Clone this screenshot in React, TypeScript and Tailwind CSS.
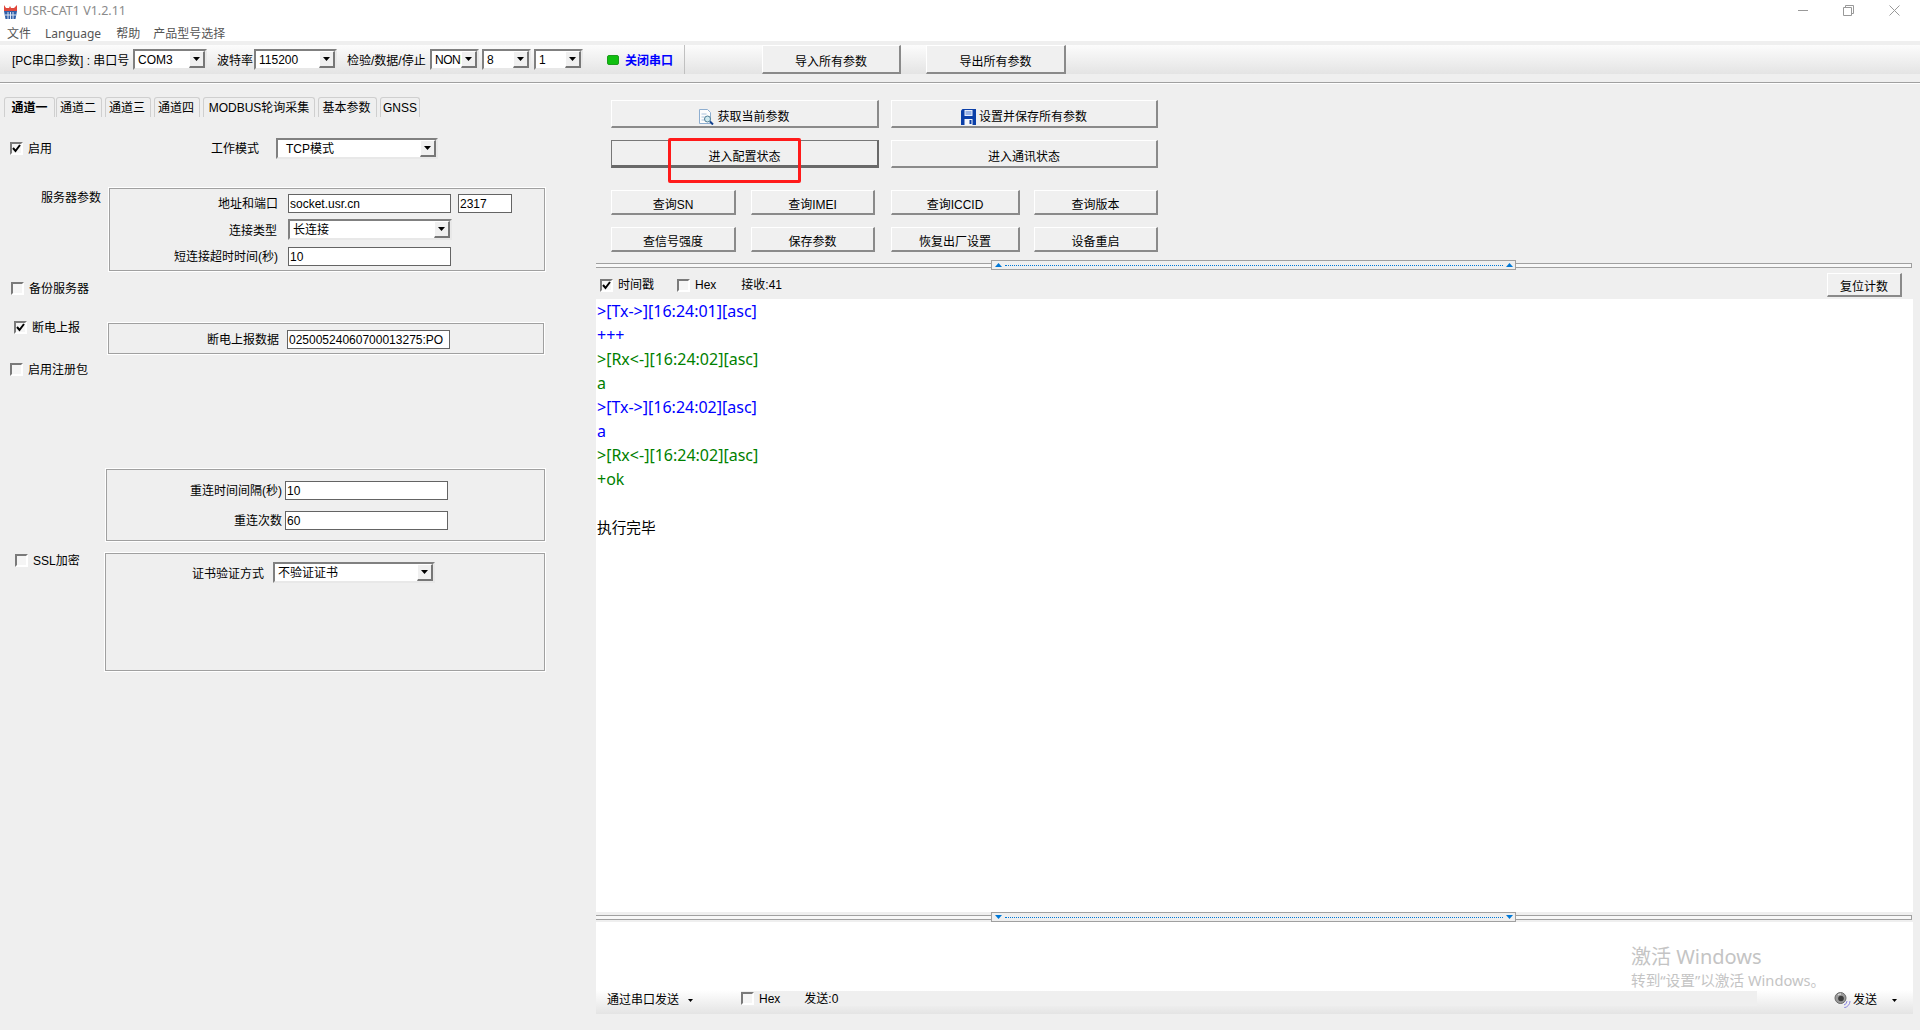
import type { ReactNode } from "react"

const bevel = "border-t border-l border-r-2 border-b-2 border-t-white border-l-white border-r-[#8a8a8a] border-b-[#8a8a8a]"

function Arrow({ small = false }: { small?: boolean }) {
  return (
    <svg width={small ? 5 : 7} height={small ? 3 : 4} viewBox="0 0 7 4" className="shrink-0">
      <path d="M0 0h7L3.500 4z" fill="#000" />
    </svg>
  )
}

function Combo({ value, w, pad = "pl-[3px]", tight = false }: { value: string; w: string; pad?: string; tight?: boolean }) {
  return (
    <div className={`${w} h-[21px] shrink-0 flex bg-white border-2 border-t-[#808080] border-l-[#808080] border-r-[#e8e8e8] border-b-[#e8e8e8]`}>
      <div className={`flex-1 overflow-hidden whitespace-nowrap leading-[18px] ${pad} ${tight ? "tracking-[-0.5px]" : ""}`}>{value}</div>
      <div className="w-[16px] h-[17px] shrink-0 flex items-center justify-center bg-[#f0f0f0] border-t border-l border-r-2 border-b-2 border-t-white border-l-white border-r-[#777777] border-b-[#777777]">
        <Arrow />
      </div>
    </div>
  )
}

function Input({ value, w }: { value: string; w: string }) {
  return (
    <div className={`${w} h-[19px] shrink-0 bg-white border border-[#646464] pl-[1px] leading-[18px] overflow-hidden whitespace-nowrap`}>
      {value}
    </div>
  )
}

function Check({ label, checked = false }: { label: string; checked?: boolean }) {
  return (
    <div className="h-[13px] flex items-center gap-[5px] whitespace-nowrap">
      <div className="w-[13px] h-[13px] shrink-0 flex items-center justify-center bg-[#f5f5f5] border-2 border-t-[#7a7a7a] border-l-[#7a7a7a] border-r-white border-b-white">
        {checked && (
          <svg width="9" height="9" viewBox="0 0 9 9">
            <path d="M1 4l2.500 3L8 1" fill="none" stroke="#000" strokeWidth="2" />
          </svg>
        )}
      </div>
      <span>{label}</span>
    </div>
  )
}

function Btn({ children, cls, focus = false, tall = false }: { children: ReactNode; cls: string; focus?: boolean; tall?: boolean }) {
  const edge = focus
    ? "border-t border-l border-r-2 border-b-[3px] border-t-[#777777] border-l-[#777777] border-r-[#696969] border-b-[#696969]"
    : bevel
  return (
    <div className={`${cls} ${edge} ${tall ? "pt-[7px]" : "pt-[5px]"} shrink-0 flex items-center justify-center gap-[3px] bg-[#f0f0f0] whitespace-nowrap`}>
      {children}
    </div>
  )
}

function Group({ cls, children }: { cls: string; children?: ReactNode }) {
  return <div className={`${cls} shrink-0 border border-[#a0a0a0] outline outline-white`}>{children}</div>
}

function Label({ text, w }: { text: string; w: string }) {
  return <div className={`${w} shrink-0 text-right whitespace-nowrap pt-[2px]`}>{text}</div>
}

function Splitter({ up = false }: { up?: boolean }) {
  const tri = up ? "M3.500 0 7 4H0z" : "M0 0h7L3.500 4z"
  return (
    <div className="h-[10px] flex items-center">
      <div className="w-[395px] h-[5px] border-y border-[#a0a0a0] bg-[#f8f8f8]" />
      <div className="w-[525px] h-[10px] flex items-center gap-[3px] pl-[3px] pr-[2px] bg-[#efefef] border border-[#a0a0a0]">
        <svg width="7" height="4" viewBox="0 0 7 4" className="shrink-0">
          <path d={tri} fill="#0078d7" />
        </svg>
        <div className="flex-1 border-t border-dotted border-[#0078d7]" />
        <svg width="7" height="4" viewBox="0 0 7 4" className="shrink-0">
          <path d={tri} fill="#0078d7" />
        </svg>
      </div>
      <div className="w-[396px] h-[5px] border-y border-r border-[#a0a0a0] bg-[#f8f8f8]" />
    </div>
  )
}

function AppIcon() {
  return (
    <svg width="13" height="14" viewBox="0 0 13 14" className="shrink-0">
      <path d="M0 0l2 3h3L6 1l1 2h3l3-3v6H0z" fill="#e0483c" />
      <path d="M0 6h13l-1.500 8H1.500z" fill="#2f5fa8" />
      <path d="M4 7v7M6.500 7v7M9 7v7M1 10h11" stroke="#dfe8f5" strokeWidth="1" />
    </svg>
  )
}

function DocIcon() {
  return (
    <svg width="15" height="16" viewBox="0 0 15 16" className="shrink-0">
      <path d="M.5.5h8l3 3v11H.5z" fill="#fdfdfd" stroke="#8eaed0" />
      <path d="M2.500 5h5M2.500 8h3M2.500 11h3" stroke="#a9c2dc" />
      <circle cx="8.500" cy="10" r="3" fill="#cfeaf0" stroke="#4f7d96" />
      <path d="M11 12.500l3 3" stroke="#12408f" strokeWidth="2" />
    </svg>
  )
}

function SaveIcon() {
  return (
    <svg width="15" height="16" viewBox="0 0 15 16" className="shrink-0">
      <path d="M0 1.500 1.500 0H15v16H0z" fill="#0b3fa8" />
      <path d="M3.500 1h8v6h-8z" fill="#e8eefc" />
      <path d="M4.500 3h6M4.500 5h6" stroke="#4a78cf" />
      <path d="M3.500 10h8v6h-8z" fill="#f4f6fb" />
      <path d="M8.500 11h2v4h-2z" fill="#0b3fa8" />
    </svg>
  )
}

function SpeakerIcon() {
  return (
    <svg width="17" height="16" viewBox="0 0 17 16" className="shrink-0">
      <circle cx="6.500" cy="6" r="5.500" fill="#9a9a9a" stroke="#6a6a6a" />
      <circle cx="7" cy="6.500" r="2.800" fill="#3c3c3c" />
      <path d="M4 3a4 4 0 0 1 3-1" stroke="#f2f2f2" fill="none" />
      <path d="M13 9q0 3-3 4M16 9q0 5-6 7" stroke="#8a84e0" strokeWidth="1" fill="none" />
    </svg>
  )
}

const tabs = [
  { t: "通道一", w: "w-[51px]", active: true },
  { t: "通道二", w: "w-[46px] ml-[1px] pr-[2px]" },
  { t: "通道三", w: "w-[46px] ml-[3px] pr-[2px]" },
  { t: "通道四", w: "w-[46px] ml-[3px] pr-[2px]" },
  { t: "MODBUS轮询采集", w: "w-[112px] ml-[3px]" },
  { t: "基本参数", w: "w-[59px] ml-[3px] pr-[2px]" },
  { t: "GNSS", w: "w-[40px] ml-[3px]" },
]

const logLines = [
  { t: ">[Tx->][16:24:01][asc]", c: "text-[#0000ff] text-[16px]" },
  { t: "+++", c: "text-[#0000ff] text-[16px]" },
  { t: ">[Rx<-][16:24:02][asc]", c: "text-[#008000] text-[16px]" },
  { t: "a", c: "text-[#008000] text-[16px]" },
  { t: ">[Tx->][16:24:02][asc]", c: "text-[#0000ff] text-[16px]" },
  { t: "a", c: "text-[#0000ff] text-[16px]" },
  { t: ">[Rx<-][16:24:02][asc]", c: "text-[#008000] text-[16px]" },
  { t: "+ok", c: "text-[#008000] text-[16px]" },
  { t: "\u00a0", c: "text-black" },
  { t: "执行完毕", c: "text-black text-[14.67px]" },
]

export default function App() {
  return (
    <div className="w-[1920px] h-[1030px] overflow-hidden flex flex-col bg-[#efefef] text-black text-[12px] font-['Liberation_Sans','Noto_Sans_CJK_SC',sans-serif]">
      {/* title bar + menu */}
      <div className="h-[41px] bg-white shrink-0 font-['Noto_Sans','Noto_Sans_CJK_SC',sans-serif]">
        <div className="h-[23px] flex items-center pl-[4px]">
          <AppIcon />
          <span className="ml-[6px] text-[12.5px] text-[#8a8a8a]">USR-CAT1 V1.2.11</span>
          <div className="ml-auto flex items-center pb-[3px]">
            <svg width="11" height="11" viewBox="0 0 11 11" className="mr-[34px]">
              <path d="M0 5.500h10" stroke="#999" />
            </svg>
            <svg width="11" height="11" viewBox="0 0 11 11" className="mr-[35px]">
              <path d="M.5 2.500h8v8h-8zM2.500 2.500v-2h8v8h-2" fill="none" stroke="#999" />
            </svg>
            <svg width="11" height="11" viewBox="0 0 11 11" className="mr-[20px]">
              <path d="M.5.500l10 10M10.500.500l-10 10" stroke="#999" />
            </svg>
          </div>
        </div>
        <div className="h-[18px] flex items-center pl-[7px] pt-[3px] text-[#555555]">
          <span>文件</span>
          <span className="ml-[14px]">Language</span>
          <span className="ml-[15px]">帮助</span>
          <span className="ml-[13px]">产品型号选择</span>
        </div>
      </div>

      {/* toolbar */}
      <div className="h-[4px] shrink-0" />
      <div className="h-[29px] shrink-0 flex items-center pl-[12px] bg-gradient-to-b from-[#fcfcfc] to-[#e4e4e4] whitespace-nowrap">
        <div className="w-[121px] shrink-0 pt-[2px]">[PC串口参数] : 串口号</div>
        <Combo value="COM3" w="w-[74px]" />
        <div className="w-[37px] ml-[10px] shrink-0 pt-[2px]">波特率</div>
        <Combo value="115200" w="w-[83px]" />
        <div className="w-[83px] ml-[10px] shrink-0 pt-[2px]">检验/数据/停止</div>
        <Combo value="NONE" w="w-[49px]" tight />
        <div className="ml-[3px]"><Combo value="8" w="w-[49px]" /></div>
        <div className="ml-[3px]"><Combo value="1" w="w-[49px]" /></div>
        <div className="ml-[24px] w-[12px] h-[10px] rounded-[2px] bg-[#10c010] border border-[#1c9c1c] shrink-0" />
        <span className="ml-[6px] font-bold text-[#0000ff] w-[59px] shrink-0 pt-[2px]">关闭串口</span>
        <div className="h-full w-[1px] bg-[#c0c0c0] shrink-0" />
        <Btn cls="h-full w-[139px] ml-[77px]">导入所有参数</Btn>
        <Btn cls="h-full w-[140px] ml-[25px]">导出所有参数</Btn>
      </div>
      <div className="h-[8px] shrink-0" />
      <div className="h-[2px] shrink-0 border-t border-[#a0a0a0] border-b-0 bg-white" />

      <div className="flex-1 flex min-h-0">
        {/* left: channel settings */}
        <div className="w-[596px] shrink-0">
          <div className="flex items-end mt-[13px] pl-[4px] h-[20px]">
            {tabs.map((tab) => (
              <div
                key={tab.t}
                className={`${tab.w} h-[20px] shrink-0 flex items-center justify-center whitespace-nowrap rounded-t-[3px] border border-b-0 border-[#cfcfcf] ${tab.active ? "font-bold" : ""}`}
              >
                {tab.t}
              </div>
            ))}
          </div>

          <div className="mt-[21px] h-[21px] flex items-center pl-[10px]">
            <div className="w-[201px] shrink-0"><Check label="启用" checked /></div>
            <div className="w-[65px] shrink-0">工作模式</div>
            <Combo value="TCP模式" w="w-[162px]" pad="pl-[8px]" />
          </div>

          <div className="mt-[29px] flex items-start">
            <div className="w-[109px] shrink-0 pl-[41px] pt-[1px]">服务器参数</div>
            <Group cls="w-[436px] h-[83px]">
              <div className="flex flex-col gap-[6px] pt-[4px]">
                <div className="flex items-center">
                  <Label text="地址和端口" w="w-[168px]" />
                  <div className="w-[10px] shrink-0" />
                  <Input value="socket.usr.cn" w="w-[163px]" />
                  <div className="ml-[7px]"><Input value="2317" w="w-[54px]" /></div>
                </div>
                <div className="flex items-center">
                  <Label text="连接类型" w="w-[167px]" />
                  <div className="w-[11px] shrink-0" />
                  <Combo value="长连接" w="w-[164px]" />
                </div>
                <div className="flex items-center">
                  <Label text="短连接超时时间(秒)" w="w-[168px]" />
                  <div className="w-[10px] shrink-0" />
                  <Input value="10" w="w-[163px]" />
                </div>
              </div>
            </Group>
          </div>

          <div className="mt-[11px] pl-[11px]"><Check label="备份服务器" /></div>

          <div className="mt-[26px] flex items-start">
            <div className="w-[108px] shrink-0 pl-[14px]"><Check label="断电上报" checked /></div>
            <Group cls="w-[436px] h-[31px] mt-[2px]">
              <div className="flex items-center pt-[5px]">
                <Label text="断电上报数据" w="w-[170px]" />
                <div className="w-[8px] shrink-0" />
                <Input value="02500524060700013275:PO" w="w-[163px]" />
              </div>
            </Group>
          </div>

          <div className="mt-[9px] pl-[10px]"><Check label="启用注册包" /></div>

          <Group cls="w-[439px] h-[72px] ml-[106px] mt-[93px]">
            <div className="flex flex-col gap-[10px] pt-[10px]">
              <div className="flex items-center">
                <Label text="重连时间间隔(秒)" w="w-[175px]" />
                <div className="w-[3px] shrink-0" />
                <Input value="10" w="w-[163px]" />
              </div>
              <div className="flex items-center">
                <Label text="重连次数" w="w-[175px]" />
                <div className="w-[3px] shrink-0" />
                <Input value="60" w="w-[163px]" />
              </div>
            </div>
          </Group>

          <div className="mt-[12px] flex items-start">
            <div className="w-[105px] shrink-0 pl-[15px] pt-[1px]"><Check label="SSL加密" /></div>
            <Group cls="w-[440px] h-[118px]">
              <div className="flex items-center pt-[8px]">
                <Label text="证书验证方式" w="w-[158px]" />
                <div className="w-[9px] shrink-0" />
                <Combo value="不验证证书" w="w-[162px]" />
              </div>
            </Group>
          </div>
        </div>

        {/* right: commands and log */}
        <div className="flex-1 flex flex-col min-w-0">
          <div className="pl-[15px] pt-[16px] flex flex-col">
            <div className="flex gap-[12px]">
              <Btn cls="w-[268px] h-[28px]" tall><DocIcon />获取当前参数</Btn>
              <Btn cls="w-[267px] h-[28px]" tall><SaveIcon />设置并保存所有参数</Btn>
            </div>
            <div className="relative flex gap-[12px] mt-[12px]">
              <Btn cls="w-[268px] h-[28px]" focus tall>进入配置状态</Btn>
              <Btn cls="w-[267px] h-[28px]" tall>进入通讯状态</Btn>
              {/* annotation drawn over the button */}
              <div className="absolute left-[57px] top-[-2px] w-[133px] h-[45px] border-[3px] border-[#ff1a1a] rounded-[2px]" />
            </div>
            <div className="flex mt-[22px]">
              <Btn cls="w-[125px] h-[25px]">查询SN</Btn>
              <Btn cls="w-[124px] h-[25px] ml-[15px]">查询IMEI</Btn>
              <Btn cls="w-[129px] h-[25px] ml-[16px]">查询ICCID</Btn>
              <Btn cls="w-[124px] h-[25px] ml-[14px]">查询版本</Btn>
            </div>
            <div className="flex mt-[12px]">
              <Btn cls="w-[125px] h-[25px]">查信号强度</Btn>
              <Btn cls="w-[124px] h-[25px] ml-[15px]">保存参数</Btn>
              <Btn cls="w-[129px] h-[25px] ml-[16px]">恢复出厂设置</Btn>
              <Btn cls="w-[124px] h-[25px] ml-[14px]">设备重启</Btn>
            </div>
          </div>

          <div className="mt-[8px]"><Splitter up /></div>

          <div className="h-[29px] shrink-0 flex items-center pl-[4px] pr-[18px] pt-[1px]">
            <Check label="时间戳" checked />
            <div className="ml-[23px]"><Check label="Hex" /></div>
            <span className="ml-[25px]">接收:41</span>
            <Btn cls="w-[75px] h-[24px] ml-auto">复位计数</Btn>
          </div>

          <div className="h-[613px] shrink-0 mr-[7px] bg-white pl-[1px] leading-[24px] font-['Noto_Sans','Noto_Sans_CJK_SC',sans-serif]">
            {logLines.map((line, i) => (
              <div key={i} className={`h-[24px] ${line.c}`}>{line.t}</div>
            ))}
          </div>

          <Splitter />

          <div className="relative h-[68px] shrink-0 mr-[7px] bg-white">
            {/* activation watermark sits over the send box */}
            <div className="absolute left-[1035px] top-[21px] text-[#c4c4c4] whitespace-nowrap font-['Noto_Sans','Noto_Sans_CJK_SC',sans-serif]">
              <div className="text-[20px] leading-[28px]">激活 Windows</div>
              <div className="text-[14.67px] leading-[20px] mt-[-1px]">转到“设置”以激活 Windows。</div>
            </div>
          </div>

          <div className="h-[24px] shrink-0 mr-[7px] flex items-start bg-gradient-to-b from-[#ffffff] to-[#e4e4e4]">
            <div className="w-[145px] shrink-0 pl-[11px] flex items-center gap-[9px] h-[20px]">
              <span className="whitespace-nowrap">通过串口发送</span>
              <Arrow small />
            </div>
            <div className="w-[1016px] h-[15px] mt-[1px] shrink-0 flex items-center bg-[#efefef]">
              <Check label="Hex" />
              <span className="ml-[24px]">发送:0</span>
            </div>
            <div className="flex-1 flex items-center h-[20px] pl-[77px]">
              <SpeakerIcon />
              <span className="ml-[2px]">发送</span>
              <div className="ml-[15px] flex"><Arrow small /></div>
            </div>
          </div>
        </div>
      </div>
    </div>
  )
}
